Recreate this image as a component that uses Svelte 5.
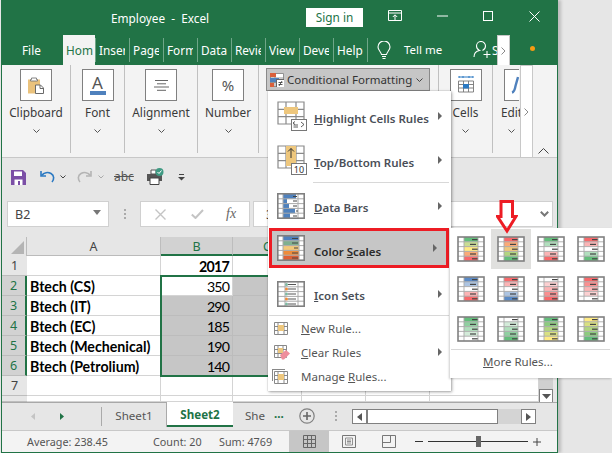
<script>
  const tabs = ['Inser', 'Page', 'Form', 'Data', 'Revie', 'View', 'Deve', 'Help'];
  const groups = [
    { label: 'Clipboard', w: 69, icon: 'clip' },
    { label: 'Font', w: 54, icon: 'font' },
    { label: 'Alignment', w: 73, icon: 'align' },
    { label: 'Number', w: 61, icon: 'num' }
  ];
  const rows = [
    { n: 1, a: '', b: '2017', bold: true },
    { n: 2, a: 'Btech (CS)', b: '350' },
    { n: 3, a: 'Btech (IT)', b: '290' },
    { n: 4, a: 'Btech (EC)', b: '185' },
    { n: 5, a: 'Btech (Mechenical)', b: '190' },
    { n: 6, a: 'Btech (Petrolium)', b: '140' },
    { n: 7, a: '', b: '' },
    { n: '', a: '', b: '' }
  ];
  const G = '#63BE7B', Y = '#FFEB84', R = '#F8696B', W = '#FFFFFF', B = '#5A8AC6';
  const scales = [
    [G, '#C9DD93', Y, '#FBAA77', R],
    [R, '#FBAA77', '#F0C87E', '#B1D580', G],
    [G, '#B1DFBD', W, '#FBB4B5', R],
    [R, '#FBB4B5', W, '#B1DFBD', G],
    [B, '#ACC4E2', W, '#FCB4B5', R],
    [R, '#FCB4B5', W, '#ACC4E2', B],
    [W, '#FCD0D1', '#FCB4B5', '#FA8E8F', R],
    [R, '#FA8E8F', '#FCB4B5', '#FCD0D1', W],
    [G, '#8FD0A0', '#B1DFBD', '#D3EBD9', W],
    [W, '#D3EBD9', '#B1DFBD', '#8FD0A0', G],
    [G, '#8CCB7E', '#B1D580', '#D8E081', Y],
    [Y, '#D8E081', '#B1D580', '#8CCB7E', G]
  ];
</script>

{#snippet scale(cols, w = 28, h = 26)}
  <svg width={w} height={h} viewBox="0 0 28 26">
    <rect x="1" y="1" width="26" height="24" fill="#fff" />
    {#each cols as c, i}
      <rect x="7" y={1 + i * 4.8} width="14" height="4.8" style:fill={c} />
      <path d={`M${i % 2 ? 13 : 15} ${3.6 + i * 4.8}h6`} stroke="#444" stroke-width="1.2" />
    {/each}
    <path d="M1 5.8h26M1 10.6h26M1 15.4h26M1 20.2h26M7 1v24M21 1v24" stroke="#aaa" stroke-width="1" fill="none" opacity=".9" />
    <rect x="1" y="1" width="26" height="24" fill="none" stroke="#808080" stroke-width="1.6" />
  </svg>
{/snippet}

{#snippet tableGrid()}
  <path d="M1 1h26v22H1zM1 8.3h26M1 15.6h26M9 1v22M19 1v22" fill="none" stroke="#8a8a8a" stroke-width="1.2" />
{/snippet}

<div class="page">
  <div class="win">
    <div class="titlebar">
      <span class="title">Employee&nbsp; -&nbsp; Excel</span>
      <span class="signin">Sign in</span>
      <svg class="c1" width="14" height="12" viewBox="0 0 14 12"><path d="M.5 .5h13v10h-13zM.5 3h13M7 10V5M4.8 7 7 4.8 9.2 7" fill="none" stroke="#fff" /></svg>
      <svg class="c2" width="11" height="2" viewBox="0 0 11 2"><path d="M0 1h11" stroke="#fff" /></svg>
      <svg class="c3" width="10" height="10" viewBox="0 0 10 10"><rect x=".5" y=".5" width="9" height="9" fill="none" stroke="#fff" /></svg>
      <svg class="c4" width="11" height="11" viewBox="0 0 11 11"><path d="M.5 .5l10 10M10.5 .5l-10 10" stroke="#fff" fill="none" /></svg>
    </div>

    <div class="tabs">
      <span class="file">File</span>
      <span class="home">Hom</span>
      {#each tabs as t}
        <span class="tab"><span class="tabtext">{t}</span></span>
      {/each}
      <span class="tabend"></span>
      <svg class="bulb" width="14" height="19" viewBox="0 0 14 19"><path d="M4.5 13.5C4 10.5 1 9.500 1 6a6 6 0 0 1 12 0c0 3.500-3 4.500-3.500 7.500zM5 15.500h4M5.500 17.500h3" fill="none" stroke="#fff" stroke-width="1.100" /></svg>
      <span class="tell">Tell me</span>
      <svg class="person" width="18" height="18" viewBox="0 0 18 18"><path d="M1 16c0-4 2.500-6 5.500-6.500C4.500 8.500 3.500 6.800 3.500 5a4.500 4.500 0 0 1 9 0c0 2-1 3.500-3 4.500M14 10v7M10.500 13.500h7" fill="none" stroke="#fff" stroke-width="1.100" /></svg>
      <span class="share">S</span>
      <span class="more"><svg width="5" height="8" viewBox="0 0 5 8"><path d="M.5 .5 4 4 .5 7.500" fill="none" stroke="#8a8a8a" /></svg></span>
      <span class="dot"></span>
    </div>

    <div class="ribbon">
      {#each groups as g}
        <div class="group" style:width={g.w + 'px'}>
          <div class="bigbtn">
            {#if g.icon === 'clip'}
              <svg width="16" height="17" viewBox="0 0 16 17"><path d="M0 2.500h12v14H0z" fill="#EAC27C" /><path d="M3.500 2.500V1h5v1.500h1V4h-7V2.500z" fill="#fff" stroke="#777" stroke-width=".9" /><path d="M7.500 8h5l3 3v5.500h-8z" fill="#fff" stroke="#6a6a6a" stroke-width="1" /><path d="M12 8v3.500h3.500" fill="none" stroke="#6a6a6a" /></svg>
            {:else if g.icon === 'font'}
              <span class="fontbtn"><span class="bigA">A</span><span class="bar"></span></span>
            {:else if g.icon === 'align'}
              <svg width="15" height="11" viewBox="0 0 15 11"><path d="M1 .5h13M3 3.800h9M0 7h15M3 10.300h9" stroke="#666" fill="none" /></svg>
            {:else}
              <span class="pct">%</span>
            {/if}
          </div>
          <span class="glabel">{g.label}</span>
          <svg class="chev" width="7" height="4" viewBox="0 0 7 4"><path d="M.5 .5 3.500 3.500 6.500 .5" fill="none" stroke="#555" /></svg>
        </div>
      {/each}

      <div class="group cfgroup">
        <div class="cfbtn">
          <svg width="14" height="14" viewBox="0 0 14 14"><path d="M.5 .5h13v13h-13zM.5 5h13M.5 9.500h13M5 .5v13" fill="#fff" stroke="#888" stroke-width=".9" /><path d="M0 0h6v4H0z" fill="#D9603B" /><path d="M0 5h9v4H0z" fill="#4F81BD" /><path d="M0 10h4v4H0z" fill="#D9603B" /><rect x="6.500" y="6.500" width="8" height="8" fill="#fff" stroke="#666" /><path d="M8.500 9.500h4M8.500 11.500h4M12 8l-3 5" stroke="#333" fill="none" stroke-width=".8" /></svg>
          <span>Conditional Formatting</span>
          <svg class="chev2" width="7" height="4" viewBox="0 0 7 4"><path d="M.5 .5 3.500 3.500 6.500 .5" fill="none" stroke="#444" /></svg>
        </div>
      </div>

      <div class="group cells">
        <div class="bigbtn">
          <svg width="16" height="18" viewBox="0 0 16 18"><path d="M1 1h14M1 0v2M15 0v2M5 0v2M11 0v2" stroke="#2B79C2" fill="none" /><path d="M.5 5h15v11H.5zM.5 8.500h15M.5 12h15M5.500 5v11M10.500 5v11" fill="#fff" stroke="#777" stroke-width=".9" /><rect x="5" y="8" width="6" height="4.500" fill="#2B79C2" /></svg>
        </div>
        <span class="glabel">Cells</span>
        <svg class="chev" width="7" height="4" viewBox="0 0 7 4"><path d="M.5 .5 3.500 3.500 6.500 .5" fill="none" stroke="#555" /></svg>
      </div>

      <div class="group edit">
        <div class="bigbtn editbtn">
          <svg width="8" height="18" viewBox="0 0 8 18"><path d="M1 16.500C3 16 4 13 4.500 10L7 1" stroke="#4F81BD" stroke-width="2.400" fill="none" /></svg>
        </div>
        <span class="glabel editlabel">Edit</span>
        <svg class="chev editchev" width="7" height="4" viewBox="0 0 7 4"><path d="M.5 .5 3.500 3.500 6.500 .5" fill="none" stroke="#555" /></svg>
      </div>

      <div class="overflow"><svg width="5" height="8" viewBox="0 0 5 8"><path d="M.5 .5 4 4 .5 7.500" fill="none" stroke="#8a8a8a" /></svg></div>
      <svg class="collapse" width="11" height="6" viewBox="0 0 11 6"><path d="M.5 5.500 5.500 .5l5 5" fill="none" stroke="#444" /></svg>
    </div>

    <div class="qat">
      <svg class="save" width="15" height="15" viewBox="0 0 15 15"><path d="M0 0h12l3 3v12H0z" fill="#7B4FA6" /><path d="M3 1.500h8v4.500H3z" fill="#fff" /><path d="M3.500 9.500h8V15h-8z" fill="#fff" /><path d="M7 11h2v4H7z" fill="#7B4FA6" /></svg>
      <svg class="undo" width="15" height="13" viewBox="0 0 15 13"><path d="M1 1v5h5" fill="none" stroke="#2B79C2" stroke-width="1.600" /><path d="M1.500 5.500C4 2.500 8 2 11 3.500c3.500 2 3.200 6 1 8.500" fill="none" stroke="#2B79C2" stroke-width="1.600" /></svg>
      <svg class="qchev" width="6" height="4" viewBox="0 0 6 4"><path d="M.5 .5 3 3 5.500 .5" fill="none" stroke="#444" /></svg>
      <svg class="redo" width="15" height="13" viewBox="0 0 15 13"><path d="M14 1v5H9" fill="none" stroke="#b4b4b4" stroke-width="1.600" /><path d="M13.500 5.500C11 2.500 7 2 4 3.500.5 5.500.8 9.500 3 12" fill="none" stroke="#b4b4b4" stroke-width="1.600" /></svg>
      <svg class="qchev2" width="6" height="4" viewBox="0 0 6 4"><path d="M.5 .5 3 3 5.500 .5" fill="none" stroke="#aaa" /></svg>
      <span class="abc">abc</span>
      <svg class="print" width="17" height="17" viewBox="0 0 17 17"><path d="M4 2h5v4H4z" fill="#fff" stroke="#555" /><path d="M0 6h15v7H0z" fill="#555" /><path d="M3 10h9v6.500H3z" fill="#fff" stroke="#444" /><circle cx="12.500" cy="4" r="4" fill="#3F9A83" /><path d="M10.500 4l1.500 1.500 2.500-3" stroke="#fff" fill="none" /></svg>
      <svg class="custom" width="7" height="7" viewBox="0 0 7 7"><path d="M1 .5h5" stroke="#444" /><path d="M0 3h7L3.500 6.500z" fill="#444" /></svg>
    </div>

    <div class="fbar">
      <div class="namebox"><span>B2</span><svg width="8" height="5" viewBox="0 0 8 5"><path d="M0 0h8L4 5z" fill="#777" /></svg></div>
      <div class="fdots"><i></i><i></i><i></i></div>
      <div class="fxbox">
        <svg width="11" height="11" viewBox="0 0 11 11"><path d="M.5 .5l10 10M10.500 .5l-10 10" stroke="#c4c4c4" stroke-width="1.400" fill="none" /></svg>
        <svg width="13" height="10" viewBox="0 0 13 10"><path d="M.8 5.500 4.500 9 12 1" stroke="#c4c4c4" stroke-width="2" fill="none" /></svg>
        <span class="fx">fx</span>
      </div>
      <div class="formula"><span class="ftext">350</span><svg width="9" height="6" viewBox="0 0 9 6"><path d="M.8 .8 4.500 4.500 8.200 .8" stroke="#777" stroke-width="2" fill="none" /></svg></div>
    </div>

    <div class="sheetwrap">
      <div class="grid">
        <div class="corner"><svg width="13" height="13" viewBox="0 0 13 13"><path d="M13 0v13H0z" fill="#b4b4b4" /></svg></div>
        <div class="ch">A</div>
        <div class="ch sel">B</div>
        <div class="ch sel">C</div>
        <div class="ch"></div>
        <div class="ch"></div>
        <div class="ch"></div>
        {#each rows as r}
          <div class="rh" class:rsel={r.n >= 2 && r.n <= 6}>{r.n}</div>
          <div class="cell text">{r.a}</div>
          <div class="cell num" class:shade={r.n >= 3 && r.n <= 6} class:bold={r.bold}>{r.b}</div>
          <div class="cell" class:shade={r.n >= 2 && r.n <= 6}></div>
          <div class="cell"></div>
          <div class="cell"></div>
          <div class="cell"></div>
        {/each}
        <div class="selection"></div>
      </div>
      <div class="vscroll">
        <span class="vbtn"><svg width="9" height="5" viewBox="0 0 9 5"><path d="M0 0h9L4.500 5z" fill="#555" /></svg></span>
      </div>
    </div>

    <div class="sheetbar">
      <div class="nav">
        <svg width="4" height="7" viewBox="0 0 4 7"><path d="M4 0v7L0 3.500z" fill="#c4c4c4" /></svg>
        <svg width="4" height="7" viewBox="0 0 4 7"><path d="M0 0v7l4-3.500z" fill="#217346" /></svg>
      </div>
      <span class="stab">Sheet1</span>
      <span class="stab current">Sheet2</span>
      <span class="stab last">She</span>
      <span class="ell">...</span>
      <svg class="plus" width="16" height="16" viewBox="0 0 16 16"><circle cx="8" cy="8" r="7.200" fill="none" stroke="#808080" stroke-width="1.200" /><path d="M8 4v8M4 8h8" stroke="#666" stroke-width="1.600" /></svg>
      <div class="sdots"><i></i><i></i><i></i></div>
      <div class="hscroll">
        <span class="hbtn"><svg width="5" height="8" viewBox="0 0 5 8"><path d="M5 0v8L0 4z" fill="#555" /></svg></span>
        <span class="thumb"></span>
        <span class="track"></span>
        <span class="hbtn r"><svg width="5" height="8" viewBox="0 0 5 8"><path d="M0 0v8l5-4z" fill="#555" /></svg></span>
      </div>
    </div>

    <div class="status">
      <span class="s1">Average: 238.45</span>
      <span class="s2">Count: 20</span>
      <span class="s3">Sum: 4769</span>
      <span class="vbtn1"><svg width="13" height="13" viewBox="0 0 13 13"><path d="M.5 .5h12v12H.5zM.5 4.500h12M.5 8.500h12M4.500 .5v12M8.500 .5v12" fill="none" stroke="#666" /></svg></span>
      <svg class="v2" width="14" height="13" viewBox="0 0 14 13"><path d="M.5 .5h13v12H.5z" fill="none" stroke="#777" /><path d="M3.500 3h7v7h-7zM5 5h4M5 6.500h4M5 8h4" fill="none" stroke="#777" stroke-width=".8" /></svg>
      <svg class="v3" width="14" height="13" viewBox="0 0 14 13"><path d="M.5 .5h13v12H.5zM.5 7.500h8v-7" fill="none" stroke="#777" /></svg>
      <span class="minus"></span>
      <span class="slider"><span class="knob"></span></span>
      <svg class="zplus" width="8" height="8" viewBox="0 0 8 8"><path d="M4 0v8M0 4h8" stroke="#444" /></svg>
    </div>
  </div>

  <div class="menu">
    <div class="mi h44">
      <span class="mic"><svg width="30" height="30" viewBox="0 0 30 30">{@render tableGrid()}<rect x="7" y="6" width="14" height="7" fill="#EEC77D" /><rect x="14.500" y="18.500" width="15" height="11" fill="#fff" stroke="#777" /><path d="M18 20.500l-2 1.500 2 1.500M21 24h-4.500M21 26h-4.500M24 21l3 2.500-3 2.500" stroke="#333" fill="none" stroke-width=".8" /></svg></span>
      <span class="ml"><u>H</u>ighlight Cells Rules</span><span class="arr"></span>
    </div>
    <div class="mi h44">
      <span class="mic"><svg width="30" height="30" viewBox="0 0 30 30">{@render tableGrid()}<rect x="9" y="1" width="10" height="20" fill="#EEC77D" /><path d="M14 13V3.500M11 6.500l3-3 3 3" stroke="#333" fill="none" /><rect x="14.500" y="18.500" width="15" height="11" fill="#fff" stroke="#777" /><text x="22" y="27.500" font-size="9" text-anchor="middle" fill="#333" font-family="Noto Sans">10</text></svg></span>
      <span class="ml"><u>T</u>op/Bottom Rules</span><span class="arr"></span>
    </div>
    <div class="sep indent"></div>
    <div class="mi h45">
      <span class="mic"><svg width="28" height="26" viewBox="0 0 28 26"><rect x=".8" y=".8" width="26.400" height="24.400" fill="#fff" /><path d="M6 1h13v4.800H6zM6 10.600h6v4.800H6zM6 15.400h12v4.800H6zM6 20.200h7V25H6zM6 5.800h4v4.800H6z" fill="#4F81BD" /><path d="M1 5.800h26M1 10.600h26M1 15.400h26M1 20.200h26M6 1v24M21 1v24" stroke="#aaa" fill="none" /><path d="M16 8h4M16 13h4M16 3.500h4M19 18h2M16 23h4" stroke="#444" /><rect x=".8" y=".8" width="26.400" height="24.400" fill="none" stroke="#808080" stroke-width="1.600" /></svg></span>
      <span class="ml"><u>D</u>ata Bars</span><span class="arr"></span>
    </div>
    <div class="mi cs">
      <span class="mic"><svg width="28" height="26" viewBox="0 0 28 26"><rect x=".8" y=".8" width="26.400" height="24.400" fill="#fff" /><rect x="6" y="1" width="16" height="4.800" fill="#4F81BD" /><rect x="6" y="5.800" width="16" height="4.800" fill="#7FB08F" /><rect x="6" y="10.600" width="16" height="4.800" fill="#F3C878" /><rect x="6" y="15.400" width="16" height="4.800" fill="#EE8B3A" /><rect x="6" y="20.200" width="16" height="4.800" fill="#DF6034" /><path d="M15 3.500h6M15 8h6M17 13h4M15 18h6M15 23h6" stroke="#444" /><path d="M1 5.800h26M1 10.600h26M1 15.400h26M1 20.200h26M6 1v24M22 1v24" stroke="#aaa" fill="none" /><rect x=".8" y=".8" width="26.400" height="24.400" fill="none" stroke="#808080" stroke-width="1.600" /></svg></span>
      <span class="ml dark">Color <u>S</u>cales</span><span class="arr"></span>
    </div>
    <div class="gap3"></div>
    <div class="mi h43">
      <span class="mic"><svg width="28" height="26" viewBox="0 0 28 26"><rect x=".8" y=".8" width="26.400" height="24.400" fill="#fff" /><path d="M1 5.800h26M1 10.600h26M1 15.400h26M1 20.200h26M8 1v24M21 1v24" stroke="#aaa" fill="none" /><path d="M11 3.500h8M11 8h8M11 13h8M11 18h8M11 23h8" stroke="#555" /><circle cx="9.500" cy="3.500" r="1.500" fill="#7FB8A2" /><circle cx="9.500" cy="8" r="1.500" fill="#EE8B3A" /><circle cx="9.500" cy="13" r="1.500" fill="#7FB8A2" /><circle cx="9.500" cy="18" r="1.500" fill="#EE8B3A" /><circle cx="9.500" cy="23" r="1.500" fill="#7FB8A2" /><rect x=".8" y=".8" width="26.400" height="24.400" fill="none" stroke="#808080" stroke-width="1.600" /></svg></span>
      <span class="ml"><u>I</u>con Sets</span><span class="arr"></span>
    </div>
    <div class="sep"></div>
    <div class="ms">
      <span class="sic"><svg width="14" height="13" viewBox="0 0 14 13"><path d="M.5 .5h13v12H.5zM.5 4.500h13M.5 8.500h13M4 .5v12M10 .5v12" fill="none" stroke="#888" /><rect x="4" y="3" width="6" height="6" fill="#EEC77D" /></svg></span>
      <span class="sl"><u>N</u>ew Rule...</span>
    </div>
    <div class="ms">
      <span class="sic"><svg width="16" height="15" viewBox="0 0 16 15"><path d="M.5 .5h12v12H.5zM.5 4.500h12M.5 8.500h12M4 .5v12M9 .5v12" fill="none" stroke="#888" /><rect x="4" y="3" width="5" height="5" fill="#EEC77D" /><path d="M6 10l6-5 4 3.500-6 6H8z" fill="#EE8E9C" /></svg></span>
      <span class="sl"><u>C</u>lear Rules</span><span class="arr"></span>
    </div>
    <div class="ms">
      <span class="sic m"><svg width="16" height="15" viewBox="0 0 16 15"><path d="M0 .5h13M.5 0v12" stroke="#888" fill="none" /><path d="M2.500 2.500h13v12h-13zM2.500 6.500h13M2.500 10.500h13M6 2.500v12M12 2.500v12" fill="none" stroke="#888" /><rect x="6" y="5" width="6" height="6" fill="#EEC77D" /></svg></span>
      <span class="sl">Manage <u>R</u>ules...</span>
    </div>
  </div>

  <div class="submenu">
    <div class="scalegrid">
      {#each scales as s, i}
        <div class="sc" class:hot={i === 1}>{@render scale(s)}</div>
      {/each}
    </div>
    <div class="subsep"></div>
    <div class="morerules"><u>M</u>ore Rules...</div>
  </div>

  <svg class="redarrow" width="22" height="34" viewBox="0 0 22 34"><path d="M5 1.500h11.500v15H20L11 31 1.500 16.500H5z" fill="#fff" fill-opacity="0" stroke="#ED1C24" stroke-width="3" /></svg>
</div>

<style>
  :global(body) { margin: 0; background: #e6e6e6; }
  .page {
    position: relative; width: 612px; height: 453px; overflow: hidden; background: #e6e6e6;
    font-family: "Noto Sans", sans-serif; font-size: 12px; color: #444;
  }
  .win {
    position: relative; margin-left: 1px; width: 557px; height: 453px; box-sizing: border-box;
    display: flex; flex-direction: column; background: #e6e6e6;
    border: 1px solid #217346; border-top: 0; box-shadow: 3px 0 3px rgba(0,0,0,.18);
  }
  .titlebar { height: 35px; background: #217346; color: #fff; display: flex; align-items: center; flex: none; }
  .title { margin-left: 109px; width: 195px; font-size: 11.800px; white-space: nowrap; }
  .signin { width: 57px; height: 19px; background: #fff; color: #217346; font-size: 11.800px; text-align: center; line-height: 19px; margin-top: -1px; }
  .c1 { margin-left: 25px; margin-top: -3px; }
  .c2 { margin-left: 35px; margin-top: -3px; }
  .c3 { margin-left: 35px; margin-top: -3px; }
  .c4 { margin-left: 36px; margin-top: -3px; }

  .tabs { height: 30px; background: #217346; color: #fff; display: flex; flex: none; font-size: 11.800px; line-height: 30px; position: relative; }
  .file { width: 61px; padding-left: 20px; box-sizing: border-box; }
  .home { width: 32px; background: #f3f3f3; color: #217346; overflow: hidden; padding-left: 3px; box-sizing: border-box; white-space: nowrap; }
  .tab { position: relative; width: 34px; height: 30px; box-sizing: border-box; display: flex; align-items: center; white-space: nowrap; padding-left: 4px; }
  .tabtext { display: block; width: 26px; overflow: hidden; height: 24px; line-height: 24px; }
  .tab::after { content: ""; position: absolute; left: 0; top: 3px; height: 24px; width: 1px; background: #6fa688; }
  .tabend { width: 1px; height: 24px; margin-top: 3px; background: #6fa688; }
  .bulb { margin: 6px 0 0 9px; }
  .tell { margin-left: 13px; width: 69px; font-size: 11.500px; }
  .person { margin: 6px 0 0 0; }
  .share { width: 5px; overflow: hidden; margin-left: 1px; }
  .more { width: 13px; height: 30px; background: #fff; border: 1px solid #c8c8c8; border-bottom: 0; box-sizing: border-box; display: flex; align-items: center; justify-content: center; }
  .dot { width: 5px; height: 5px; border-radius: 50%; background: #f59b12; margin: 11px 0 0 20px; }

  .ribbon { height: 93px; background: #f3f3f3; display: flex; flex: none; border-bottom: 1px solid #c8c8c8; box-sizing: border-box; position: relative; }
  .group { position: relative; height: 88px; border-right: 1px solid #c0c0c0; box-sizing: border-box; display: flex; flex-direction: column; align-items: center; }
  .bigbtn { width: 32px; height: 32px; margin-top: 4px; box-sizing: border-box; border: 1.500px solid #808080; background: #fff; display: flex; align-items: center; justify-content: center; flex: none; }
  .glabel { font-size: 11.800px; color: #3a3a3a; line-height: 16px; margin-top: 3px; white-space: nowrap; }
  .chev { margin-top: 9px; }
  .fontbtn { display: flex; flex-direction: column; align-items: center; }
  .bigA { font-size: 17px; line-height: 16px; color: #555; }
  .bar { width: 16px; height: 4px; background: #4F81BD; }
  .pct { font-size: 15px; color: #555; }
  .cfgroup { width: 180px; }
  .cfbtn { margin: 3px 0 0 7px; width: 164px; height: 23px; background: #c6c6c6; border: 1.500px solid #8a8a8a; box-sizing: border-box; display: flex; align-items: center; gap: 3px; padding-left: 3px; font-size: 11.500px; color: #333; align-self: flex-start; white-space: nowrap; }
  .chev2 { margin-left: 1px; }
  .cells { width: 54px; }
  .edit { width: 27px; border-right: 0; align-items: flex-start; overflow: hidden; padding-left: 8px; }
  .editbtn { border-right: 0; width: 15px; margin-left: 3px; justify-content: flex-end; }
  .editchev { margin-left: 7px; }
  .overflow { width: 13px; height: 92px; background: #fff; border: 1px solid #c8c8c8; border-bottom: 0; box-sizing: border-box; display: flex; align-items: center; justify-content: center; }
  .collapse { margin: 83px 0 0 5px; }

  .qat { height: 37px; display: flex; align-items: center; flex: none; background: #e6e6e6; }
  .save { margin-left: 9px; margin-top: 1px; }
  .undo { margin-left: 14px; }
  .qchev { margin-left: 5px; }
  .redo { margin-left: 11px; }
  .qchev2 { margin-left: 6px; }
  .abc { margin-left: 10px; font-size: 12px; color: #555; text-decoration: line-through; }
  .print { margin-left: 13px; }
  .custom { margin-left: 14px; margin-top: 1px; }

  .fbar { height: 26px; margin-top: 6px; display: flex; flex: none; }
  .namebox { margin-left: 5px; width: 102px; background: #fff; border: 1px solid #d0d0d0; box-sizing: border-box; display: flex; align-items: center; justify-content: space-between; padding: 0 7px; font-size: 12.500px; color: #444; }
  .namebox svg { margin-top: -3px; }
  .fdots { width: 31px; display: flex; flex-direction: column; align-items: center; justify-content: center; gap: 2px; }
  .fdots i, .sdots i { width: 2px; height: 2px; background: #aaa; display: block; }
  .fxbox { width: 110px; background: #fff; border: 1px solid #d0d0d0; box-sizing: border-box; display: flex; align-items: center; padding-left: 14px; gap: 25px; }
  .fx { font-family: "Liberation Serif", serif; font-style: italic; font-size: 14px; color: #666; margin-left: -3px; }
  .formula { margin-left: 3px; width: 300px; background: #fff; border: 1px solid #d0d0d0; box-sizing: border-box; display: flex; align-items: center; justify-content: space-between; padding: 0 3px 0 12px; }
  .ftext { font-size: 12px; color: #333; }

  .sheetwrap { height: 165px; margin-top: 10px; display: flex; flex: none; }
  .grid { position: relative; width: 537px; display: grid; grid-template-columns: 25px 134px 72px 69px 64px 64px 109px; grid-template-rows: 19px repeat(7, 20px) 6px; overflow: hidden; background: #fff; }
  .corner { background: #e6e6e6; border-right: 1px solid #bbb; display: flex; align-items: flex-end; justify-content: flex-end; padding: 0 2px 2px 0; }
  .ch { background: #e6e6e6; border-right: 1px solid #bdbdbd; color: #444; text-align: center; font-size: 12.500px; line-height: 19px; box-sizing: border-box; border-bottom: 1px solid #bbb; }
  .ch.sel { background: #d2d2d2; color: #217346; border-bottom: 2px solid #217346; }
  .rh { background: #e6e6e6; border-bottom: 1px solid #bdbdbd; box-sizing: border-box; text-align: center; font-size: 12.500px; line-height: 19px; color: #444; }
  .rh.rsel { background: #d2d2d2; color: #217346; border-right: 2px solid #217346; }
  .cell { border-right: 1px solid #d4d4d4; border-bottom: 1px solid #d4d4d4; box-sizing: border-box; font-family: Lato, sans-serif; font-size: 14.200px; line-height: 21px; color: #000; white-space: nowrap; overflow: hidden; }
  .text { font-weight: 700; padding-left: 3px; }
  .num { text-align: right; padding-right: 3px; letter-spacing: -.9px; }
  .bold { font-weight: 700; letter-spacing: -.7px; }
  .shade { background: #c6c6c6; border-color: #bcbcbc; }
  .selection { position: absolute; left: 158px; top: 38px; width: 400px; height: 102px; box-sizing: border-box; border: 2px solid #217346; pointer-events: none; }
  .vscroll { width: 14px; background: #d0d0d0; position: relative; display: flex; align-items: flex-end; }
  .vbtn { width: 14px; height: 14px; background: #fff; border: 1px solid #808080; box-sizing: border-box; display: flex; align-items: center; justify-content: center; margin-bottom: -1px; }

  .sheetbar { height: 28px; border-top: 1px solid #a8a8a8; box-sizing: border-box; display: flex; align-items: flex-start; flex: none; position: relative; font-size: 11.600px; }
  .nav { width: 100px; height: 19px; margin-top: 4px; border-right: 1px solid #aaa; box-sizing: border-box; display: flex; align-items: center; gap: 25px; padding-left: 29px; }
  .stab { width: 65px; height: 24px; text-align: center; line-height: 25px; color: #555; border-right: 1px solid #aaa; box-sizing: border-box; }
  .stab.current { width: 66px; height: 25px; background: #fff; color: #217346; font-weight: 700; border-bottom: 2px solid #217346; border-right: 0; margin-top: -1px; line-height: 26px; }
  .stab.last { width: 41px; border: 0; text-align: left; padding-left: 12px; }
  .ell { color: #217346; font-weight: 700; width: 25px; line-height: 22px; }
  .plus { margin: 5px 0 0 0; }
  .sdots { width: 42px; height: 11px; margin-top: 8px; display: flex; flex-direction: column; align-items: center; gap: 2px; }
  .hscroll { margin: 6px 0 0 -5px; width: 184px; height: 15px; display: flex; flex: none; }
  .hbtn { width: 15px; height: 15px; background: #fff; border: 1px solid #808080; box-sizing: border-box; display: flex; align-items: center; justify-content: center; }
  .thumb { width: 132px; background: #fff; border: 1px solid #808080; border-left-width: 2px; box-sizing: border-box; margin-left: -1px; }
  .track { width: 23px; background: #d4d4d4; }

  .status { height: 22px; background: #f3f3f3; border-top: 1px solid #c8c8c8; box-sizing: border-box; flex: none; display: flex; align-items: center; font-size: 10.800px; color: #555; white-space: nowrap; }
  .s1 { margin-left: 25px; width: 126px; }
  .s2 { width: 66px; }
  .s3 { width: 70px; }
  .vbtn1 { width: 40px; height: 21px; background: #c6c6c6; display: flex; align-items: center; justify-content: center; }
  .v2 { margin-left: 13px; }
  .v3 { margin-left: 26px; }
  .minus { width: 8px; height: 1px; background: #333; margin-left: 19px; }
  .slider { width: 100px; height: 1px; background: #333; margin-left: 5px; position: relative; }
  .knob { position: absolute; left: 48px; top: -5px; width: 5px; height: 11px; background: #666; }
  .zplus { margin-left: 5px; }

  .menu { position: absolute; left: 268px; top: 91px; width: 183px; height: 300px; background: #fff; box-sizing: border-box; padding-top: 3px; box-shadow: 1px 1px 3px rgba(0,0,0,.35), 0 0 1px rgba(0,0,0,.3); }
  .mi { display: flex; align-items: center; position: relative; padding-left: 9px; box-sizing: border-box; }
  .h44 { height: 44px; }
  .h45 { height: 45px; }
  .h43 { height: 43px; }
  .mic { width: 37px; display: flex; flex: none; }
  .ml { font-size: 11.500px; font-weight: 600; color: #4a4f58; margin-top: 4px; white-space: nowrap; }
  .ml.dark { color: #2a2a2a; margin-top: 7px; }
  .arr { position: absolute; right: 9px; top: 50%; margin-top: -4px; border-left: 4px solid #666; border-top: 4px solid transparent; border-bottom: 4px solid transparent; }
  .sep { height: 1px; background: #d8d8d8; margin: 0 2px 0 1px; }
  .sep.indent { margin-left: 45px; }
  .cs { height: 40px; margin: 0 2px 0 1px; background: #c6c6c6; border: 3px solid #ED1C24; padding-left: 5px; }
  .gap3 { height: 4px; }
  .ms { height: 24px; display: flex; align-items: center; position: relative; padding-left: 6px; }
  .sic { width: 27px; display: flex; flex: none; }
  .sic.m { margin-left: -2px; width: 29px; }
  .sl { font-size: 11.500px; color: #555; white-space: nowrap; }

  .submenu { position: absolute; left: 450px; top: 228px; width: 162px; height: 150px; background: #fff; box-shadow: -1px 1px 2px rgba(0,0,0,.2); box-sizing: border-box; }
  .scalegrid { display: grid; grid-template-columns: repeat(4, 40px); grid-template-rows: repeat(3, 40px); padding-left: 1px; padding-top: 1px; }
  .sc { display: flex; align-items: center; justify-content: center; }
  .hot { background: #e0e0de; }
  .subsep { height: 1px; background: #d8d8d8; margin: 0 2px 0 1px; }
  .morerules { font-size: 11.500px; color: #555; padding: 4px 0 0 33px; }
  .redarrow { position: absolute; left: 496px; top: 200px; }
</style>
